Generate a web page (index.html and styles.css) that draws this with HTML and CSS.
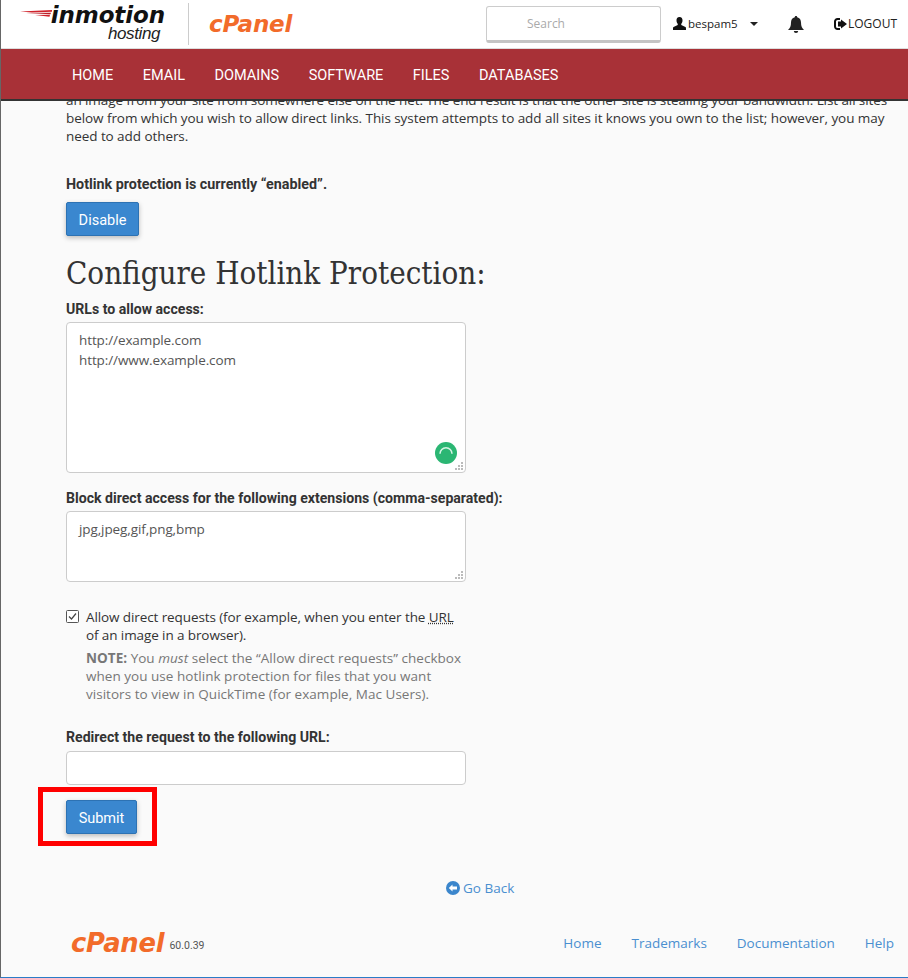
FILE: index.html
```html
<!DOCTYPE html>
<html lang="en">
<head>
<meta charset="utf-8">
<title>Hotlink Protection</title>
<link rel="stylesheet" href="styles.css">
</head>
<body>
<header class="topbar">
  <div class="brandbar">
    <div class="logo-inmotion">
      <svg class="swoosh" width="32" height="9" viewBox="0 0 32 9"><path d="M0 1.500 L32 0 L32 1.800 L12 2.400 Z" fill="#d0232c"/><path d="M6 3 L31 2.700 L30.500 4.300 Z" fill="#b81f28"/><path d="M15 5 L30 4.800 L29.500 6.800 Z" fill="#d0232c"/></svg>
      <div class="logo-words"><span class="inm">inmotion</span><span class="host">hosting</span></div>
    </div>
    <div class="logo-divider"></div>
    <span class="cp-logo">cPanel</span>
    <div class="tools">
      <div class="searchbox">Search</div>
      <div class="user">
        <svg width="13" height="13" viewBox="0 0 13 13"><path d="M6.500 0C8.600 0 9.700 1.600 9.500 3.800 9.400 5.200 8.900 6.200 8.200 6.900L8.300 8 12.400 10C13 10.300 13 11 13 13H0C0 11 0 10.300 .6 10L4.700 8 4.800 6.900C4.100 6.200 3.600 5.200 3.500 3.800 3.300 1.600 4.400 0 6.500 0Z" fill="#111"/></svg>
        <span>bespam5</span>
        <span class="caret"></span>
      </div>
      <svg class="bell" width="16" height="17" viewBox="0 0 16 17"><path d="M8 0c.8 0 1.200.5 1.200 1.200C11.700 1.800 13 3.800 13 6.500c0 4 1 5.500 3 7.500H0c2-2 3-3.500 3-7.500C3 3.800 4.300 1.800 6.800 1.200 6.800.5 7.200 0 8 0Z" fill="#222"/><path d="M5.800 15h4.400a2.200 2 0 0 1-4.400 0Z" fill="#222"/></svg>
      <div class="logout">
        <svg width="14" height="12" viewBox="0 0 14 12"><path d="M6 1H3.500A2.500 2.500 0 0 0 1 3.500v5A2.500 2.500 0 0 0 3.500 11H6" fill="none" stroke="#111" stroke-width="2"/><path d="M7 3.500V1.500L13 6 7 10.500V8.500H4v-5Z" fill="#111"/></svg>
        <span>LOGOUT</span>
      </div>
    </div>
  </div>
  <nav class="mainnav">
    <a>HOME</a><a>EMAIL</a><a>DOMAINS</a><a>SOFTWARE</a><a>FILES</a><a>DATABASES</a>
  </nav>
</header>

<main class="content">
  <p class="intro"><span class="intro-first">an image from your site from somewhere else on the net. The end result is that the other site is stealing your bandwidth. List all sites</span><br>below from which you wish to allow direct links. This system attempts to add all sites it knows you own to the list; however, you may<br>need to add others.</p>
  <p class="status">Hotlink protection is currently “enabled”.</p>
  <button class="btn btn-disable">Disable</button>
  <h1 class="title">Configure Hotlink Protection:</h1>

  <label class="field-label">URLs to allow access:</label>
  <div class="textarea urls">
    <div>http://example.com<br>http://www.example.com</div>
    <span class="spinner"><svg width="22" height="22" viewBox="0 0 22 22"><circle cx="11" cy="11" r="11" fill="#2bb673"/><path d="M5 11.700A6 6 0 0 1 17 11.700" fill="none" stroke="#d5f3e4" stroke-width="1.600"/></svg></span>
    <svg class="grip" width="8" height="8" viewBox="0 0 8 8"><path d="M6 0h2v2H6zM3 3h2v2H3zM6 3h2v2H6zM0 6h2v2H0zM3 6h2v2H3zM6 6h2v2H6z" fill="#bbb"/></svg>
  </div>

  <label class="field-label ext-label">Block direct access for the following extensions (comma-separated):</label>
  <div class="textarea exts">
    <div>jpg,jpeg,gif,png,bmp</div>
    <svg class="grip" width="8" height="8" viewBox="0 0 8 8"><path d="M6 0h2v2H6zM3 3h2v2H3zM6 3h2v2H6zM0 6h2v2H0zM3 6h2v2H3zM6 6h2v2H6z" fill="#bbb"/></svg>
  </div>

  <div class="checkrow">
    <span class="checkbox"><svg width="13" height="13" viewBox="0 0 13 13"><rect x=".5" y=".5" width="12" height="12" rx="1" fill="#fff" stroke="#555"/><path d="M3 6.500 5.500 9 10 3.500" fill="none" stroke="#444" stroke-width="1.200"/></svg></span>
    <div class="checktext">
      <div class="checkmain">Allow direct requests (for example, when you enter the <abbr>URL</abbr> of an image in a browser).</div>
      <div class="note"><b>NOTE:</b> You <em>must</em> select the “Allow direct requests” checkbox when you use hotlink protection for files that you want visitors to view in QuickTime (for example, Mac Users).</div>
    </div>
  </div>

  <label class="field-label redirect-label">Redirect the request to the following URL:</label>
  <div class="textinput"></div>

  <div class="submit-wrap">
    <button class="btn btn-submit">Submit</button>
    <span class="redbox"></span>
  </div>

  <div class="goback">
    <svg width="14" height="14" viewBox="0 0 14 14"><circle cx="7" cy="7" r="7" fill="#3b86cc"/><path d="M2.800 7 6.500 3.500V5.500H11V8.500H6.500V10.500Z" fill="#fff"/></svg>
    <a>Go Back</a>
  </div>

  <footer class="foot">
    <div class="foot-brand"><span class="cp-logo cp-small">cPanel</span><span class="version">60.0.39</span></div>
    <div class="foot-links"><a>Home</a><a>Trademarks</a><a>Documentation</a><a>Help</a></div>
  </footer>
</main>
</body>
</html>
```

FILE: styles.css
```css
* { box-sizing: border-box; }
html, body { margin: 0; height: 100%; }
body {
  width: 908px;
  height: 978px;
  overflow: hidden;
  position: relative;
  background: #fafafa;
  color: #333;
  font-family: "Open Sans", "Liberation Sans", sans-serif;
  font-size: 13.5px;
  border-left: 1px solid #666;
  border-bottom: 1px solid #2a7cc7;
}
.topbar { position: absolute; top: 0; left: 0; right: 0; z-index: 2; }
.brandbar {
  height: 49px;
  background: #fff;
  border-bottom: 1px solid #ddd;
  display: flex;
  align-items: center;
}
.logo-inmotion { display: flex; margin-left: 19px; width: 148px; align-items: flex-start; margin-top: -2px; }
.swoosh { margin-top: 5px; margin-right: -1px; flex: none; }
.logo-words { display: flex; flex-direction: column; align-items: flex-end; width: 114px; }
.inm { font: oblique 700 23px/21px "DejaVu Sans", sans-serif; color: #111; letter-spacing: -.1px; }
.host { font: italic 400 17px/17px "Liberation Sans", sans-serif; color: #222; margin-top: -1px; margin-right: 5px; letter-spacing: -.4px; }
.logo-divider { width: 1px; height: 42px; background: #ccc; margin-left: 20px; }
.cp-logo { font: oblique 700 23px/24px "DejaVu Sans", sans-serif; color: #f26b2a; margin-left: 20px; letter-spacing: -.2px; }
.tools { margin-left: auto; display: flex; align-items: center; font-size: 12px; color: #222; }
.searchbox {
  width: 175px;
  height: 37px;
  margin-top: 1px;
  background: #fff;
  border: 1px solid #ccc;
  border-bottom: 3px solid #c4c4c4;
  border-radius: 3px;
  color: #aaa;
  padding: 8px 0 0 40px;
  font-size: 12px;
}
.user { display: flex; align-items: center; gap: 2px; margin-left: 12px; width: 100px; margin-top: -1px; font-size: 11.500px; }
.caret { border: 4px solid transparent; border-top-color: #222; border-bottom: 0; margin-left: 10px; }
.bell { margin-left: 15px; }
.logout { display: flex; align-items: center; gap: 0; margin-left: 30px; margin-right: 11px; margin-top: -1px; }
.mainnav {
  height: 52px;
  padding: 2px 0 0 71px;
  background: #a83137;
  border-bottom: 2px solid #333;
  display: flex;
  align-items: center;
  gap: 29.500px;
  color: #fff;
  font: 14.500px "Roboto", sans-serif;
}
.content { padding: 91px 0 0 65px; }
.intro { margin: 0; white-space: nowrap; line-height: 18px; letter-spacing: -.066px; }
.intro-first { letter-spacing: -.09px; }
.status { margin: 30px 0 0; font: 700 14.300px/19px "Roboto", sans-serif; }
.btn {
  display: block;
  background: #3a87cf;
  color: #fff;
  border: 1px solid #2d72b3;
  border-radius: 2px;
  box-shadow: 0 2px 5px rgba(0,0,0,.25);
  font: 14.500px "Roboto", sans-serif;
  padding: 3px 0 0;
}
.btn-disable { width: 73px; height: 34px; margin-top: 8px; }
.title {
  margin: 18px 0 0;
  font: 400 31px/38px "DejaVu Serif Condensed", "DejaVu Serif", serif;
  font-stretch: condensed;
  color: #333;
}
.field-label { display: block; font: 700 14.100px/19px "Roboto", sans-serif; margin-top: 8px; }
.textarea, .textinput {
  position: relative;
  width: 400px;
  background: #fff;
  border: 1px solid #ccc;
  border-radius: 4px;
  line-height: 20px;
  color: #555;
  letter-spacing: -.1px;
}
.textarea { padding: 7px 12px; }
.urls { height: 151px; margin-top: 3px; }
.ext-label { margin-top: 16px; }
.exts { height: 71px; margin-top: 3px; }
.spinner { position: absolute; right: 8px; bottom: 8px; line-height: 0; }
.grip { position: absolute; right: 2px; bottom: 2px; }
.checkrow { display: flex; margin-top: 26px; width: 400px; }
.checkbox { width: 20px; flex: none; padding-top: 1px; }
.checktext { line-height: 18px; }
.checkmain { letter-spacing: -.1px; }
.note { color: #777; margin-top: 5px; letter-spacing: .03px; }
abbr { text-decoration: underline dotted; }
.redirect-label { margin-top: 25px; }
.textinput { height: 34px; margin-top: 4px; }
.submit-wrap { position: relative; margin-top: 15px; width: 71px; }
.btn-submit { width: 71px; height: 34px; }
.redbox {
  position: absolute;
  left: -28px;
  top: -13px;
  width: 119px;
  height: 59px;
  border: 5px solid #f00;
}
.goback {
  display: flex;
  align-items: center;
  gap: 3px;
  margin: 45px 0 0 380px;
  color: #4a8fd0;
}
.foot { display: flex; justify-content: space-between; align-items: center; margin-top: 34px; width: 828px; }
.foot-brand { display: flex; align-items: center; gap: 5px; margin-left: 5px; }
.cp-small { margin-left: 0; font-size: 25.800px; }
.version { font: 10.500px "Roboto", sans-serif; color: #555; margin-top: 4px; }
.foot-links { display: flex; gap: 30px; color: #4a8fd0; }
```
